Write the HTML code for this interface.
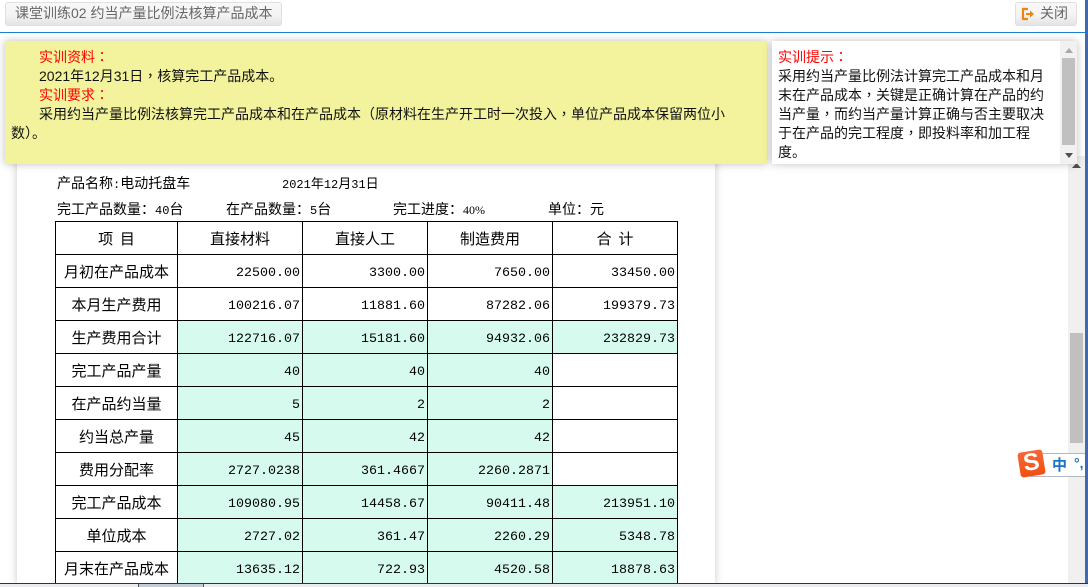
<!DOCTYPE html>
<html><head><meta charset="utf-8"><style>
html,body{margin:0;padding:0;width:1088px;height:587px;overflow:hidden;background:#fff}
*{box-sizing:border-box}
body{position:relative;font-family:"Liberation Sans","Noto Sans CJK SC",sans-serif}
.a{position:absolute}
.btn{border:1px solid #e0e0e0;border-radius:3px;background:linear-gradient(#f8f8f8,#f4f4f4 55%,#e4e4e4);color:#666;font-size:14px;line-height:21px}
.l{position:absolute;white-space:nowrap;font-size:14px;line-height:19px;color:#111}
.r{color:#f00}
.p{font-family:"Noto Sans CJK TC",sans-serif}
.s{position:absolute;white-space:nowrap;font-family:"WenQuanYi Zen Hei","Noto Sans CJK SC",sans-serif;font-size:14px;line-height:20px;color:#000}
.m{font-family:"Liberation Mono",monospace;font-size:12px}
table{position:absolute;left:55px;top:221px;border-collapse:collapse;table-layout:fixed;width:623px;font-family:"WenQuanYi Zen Hei","Noto Sans CJK SC",sans-serif;font-size:15px;color:#000}
td{border:1px solid #000;height:33px;padding:1px 0 0;text-align:center;line-height:20px;overflow:hidden}
td.n{text-align:right;padding:5px 2px 0 0;font-family:"Liberation Mono",monospace;font-size:13.33px}
.g{background:#d6fbee}
</style></head><body>

<div class="a btn" style="left:5px;top:2px;width:277px;height:24px;padding-left:9px">课堂训练02 约当产量比例法核算产品成本</div>
<div class="a btn" style="left:1015px;top:2px;width:62px;height:24px;padding-left:24px">关闭</div>
<svg class="a" style="left:1021px;top:7px" width="14" height="14" viewBox="0 0 14 14"><path d="M7 2H2v10h5" fill="none" stroke="#ee8412" stroke-width="2.2"/><path d="M5 6h4V3.500L13 7l-4 3.500V8H5z" fill="#ee8412"/></svg>
<div class="a" style="left:0;top:32px;width:1085px;height:1px;background:#1b80d0"></div>
<div class="a" style="left:1085px;top:0;width:3px;height:584px;background:#4169b0"></div>

<div class="a" style="left:1068px;top:156px;width:17px;height:428px;background:#f0f0f0"></div>
<div class="a" style="left:1070px;top:333px;width:13px;height:110px;background:#c0c0c0"></div>
<svg class="a" style="left:1072px;top:163px" width="9" height="5"><path d="M0 5L4.500 0L9 5z" fill="#505050"/></svg>

<div class="a" style="left:17px;top:150px;width:698px;height:434px;background:#fff;box-shadow:0 0 8px rgba(0,0,0,.22)"></div>

<div class="s" style="left:57px;top:173px">产品名称<span class="m">:</span>电动托盘车</div>
<div class="s" style="left:282px;top:173px;font-size:13px"><span class="m">2021</span>年<span class="m">12</span>月<span class="m">31</span>日</div>
<div class="s" style="left:57px;top:199px">完工产品数量：<span class="m">40</span>台</div>
<div class="s" style="left:226px;top:199px">在产品数量：<span class="m">5</span>台</div>
<div class="s" style="left:393px;top:199px">完工进度：<span style="font-family:'Liberation Serif',serif;font-size:12px">40%</span></div>
<div class="s" style="left:548px;top:199px">单位：元</div>

<table>
<colgroup><col style="width:122px"><col style="width:125px"><col style="width:125px"><col style="width:125px"><col style="width:125px"></colgroup>
<tr><td>项&nbsp;&nbsp;目</td><td>直接材料</td><td>直接人工</td><td>制造费用</td><td>合&nbsp;&nbsp;计</td></tr>
<tr><td>月初在产品成本</td><td class="n">22500.00</td><td class="n">3300.00</td><td class="n">7650.00</td><td class="n">33450.00</td></tr>
<tr><td>本月生产费用</td><td class="n">100216.07</td><td class="n">11881.60</td><td class="n">87282.06</td><td class="n">199379.73</td></tr>
<tr><td>生产费用合计</td><td class="n g">122716.07</td><td class="n g">15181.60</td><td class="n g">94932.06</td><td class="n g">232829.73</td></tr>
<tr><td>完工产品产量</td><td class="n g">40</td><td class="n g">40</td><td class="n g">40</td><td class="n"></td></tr>
<tr><td>在产品约当量</td><td class="n g">5</td><td class="n g">2</td><td class="n g">2</td><td class="n"></td></tr>
<tr><td>约当总产量</td><td class="n g">45</td><td class="n g">42</td><td class="n g">42</td><td class="n"></td></tr>
<tr><td>费用分配率</td><td class="n g">2727.0238</td><td class="n g">361.4667</td><td class="n g">2260.2871</td><td class="n"></td></tr>
<tr><td>完工产品成本</td><td class="n g">109080.95</td><td class="n g">14458.67</td><td class="n g">90411.48</td><td class="n g">213951.10</td></tr>
<tr><td>单位成本</td><td class="n g">2727.02</td><td class="n g">361.47</td><td class="n g">2260.29</td><td class="n g">5348.78</td></tr>
<tr><td>月末在产品成本</td><td class="n g">13635.12</td><td class="n g">722.93</td><td class="n g">4520.58</td><td class="n g">18878.63</td></tr>
</table>

<div class="a" style="left:5px;top:41px;width:762px;height:123px;background:#f3f39d;box-shadow:0 0 8px rgba(0,0,0,.25)"></div>
<div class="l r" style="left:39px;top:48px">实训资料<span class="p">：</span></div>
<div class="l" style="left:39px;top:67px">2021年12月31日<span class="p">，</span>核算完工产品成本。</div>
<div class="l r" style="left:39px;top:86px">实训要求<span class="p">：</span></div>
<div class="l" style="left:39px;top:105px">采用约当产量比例法核算完工产品成本和在产品成本<span class="p">（</span>原材料在生产开工时一次投入<span class="p">，</span>单位产品成本保留两位小</div>
<div class="l" style="left:11px;top:124px">数<span class="p">）</span>。</div>

<div class="a" style="left:772px;top:41px;width:305px;height:123px;background:#fff;box-shadow:0 0 8px rgba(0,0,0,.25)"></div>
<div class="a" style="left:1060px;top:41px;width:17px;height:123px;background:#f1f1f1"></div>
<div class="a" style="left:1062px;top:58px;width:13px;height:87px;background:#c0c0c0"></div>
<svg class="a" style="left:1065px;top:48px" width="8" height="5"><path d="M0 5L4 0L8 5z" fill="#a8a8a8"/></svg>
<svg class="a" style="left:1065px;top:153px" width="8" height="5"><path d="M0 0L4 5L8 0z" fill="#505050"/></svg>
<div class="l r" style="left:778px;top:48px">实训提示<span class="p">：</span></div>
<div class="l" style="left:778px;top:67px">采用约当产量比例法计算完工产品成本和月</div>
<div class="l" style="left:778px;top:86px">末在产品成本<span class="p">，</span>关键是正确计算在产品的约</div>
<div class="l" style="left:778px;top:105px">当产量<span class="p">，</span>而约当产量计算正确与否主要取决</div>
<div class="l" style="left:778px;top:124px">于在产品的完工程度<span class="p">，</span>即投料率和加工程</div>
<div class="l" style="left:778px;top:143px">度。</div>

<div class="a" style="left:1030px;top:453px;width:55px;height:24px;background:#fff;border:1px solid #b4b8c4;border-right:0"></div>
<div class="a" style="left:1052px;top:455px;font-size:15px;line-height:20px;font-weight:bold;color:#1a73c8;font-family:'Noto Sans CJK SC',sans-serif">中</div>
<div class="a" style="left:1074px;top:453px;font-size:14px;line-height:20px;font-weight:bold;color:#1a73c8">°,</div>
<div class="a" style="left:1019px;top:451px;width:25px;height:25px;border-radius:3px;background:linear-gradient(#f4683a,#f24f10);transform:rotate(-9deg);color:#fff;font-size:24px;line-height:24px;font-weight:bold;text-align:center">S</div>

<div class="a" style="left:0;top:583px;width:1088px;height:1px;background:#333"></div>
<div class="a" style="left:0;top:584px;width:1088px;height:3px;background:#ececf0"></div>
<div class="a" style="left:138px;top:584px;width:66px;height:3px;background:#c4ccd8;border-left:1px solid #555;border-right:1px solid #555"></div>
</body></html>
